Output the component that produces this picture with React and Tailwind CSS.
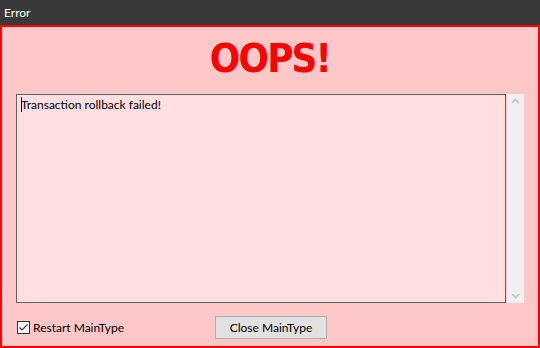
export default function App() {
    return (
        <div className="w-[540px] h-[348px] flex flex-col bg-[#ffc8c8] text-[12px] font-['Lato','Noto_Sans',sans-serif] overflow-hidden">
            <div className="h-[25px] shrink-0 bg-[#393939] text-white flex items-center pl-[4px] text-[12px]">
                Error
            </div>
            <div className="flex-1 flex flex-col border-2 border-[#ff0000] px-[14px] pt-[10px]">
                <h1 className="text-center text-[39px] leading-[44px] font-bold text-[#ff0000] font-['DejaVu_Sans',Verdana,sans-serif] tracking-[-2px] scale-x-[0.92]">
                    OOPS!
                </h1>
                <div className="mt-[13px] flex gap-[1px] h-[209px]">
                    <div className="flex-1 border border-[#646464] bg-[#ffdfdf] px-[4px] py-[1px] text-black relative">
                        <span className="absolute left-[4px] top-[2px] w-px h-[15px] bg-black"></span>
                        Transaction rollback failed!
                    </div>
                    <div className="w-[17px] bg-[#f0f0f0] flex flex-col justify-between items-center py-[4px]">
                        <svg width="9" height="6" viewBox="0 0 9 6">
                            <path d="M1 5 L4.5 1.5 L8 5" stroke="#c2c2c2" strokeWidth="1.6" fill="none" />
                        </svg>
                        <svg width="9" height="6" viewBox="0 0 9 6">
                            <path d="M1 1 L4.5 4.5 L8 1" stroke="#c2c2c2" strokeWidth="1.6" fill="none" />
                        </svg>
                    </div>
                </div>
                <div className="flex items-center mt-[13px] h-[23px]">
                    <label className="flex items-center gap-[3px] pl-[1px] w-[199px]">
                        <span className="w-[13px] h-[13px] border border-[#333333] bg-white flex items-center justify-center">
                            <svg width="11" height="11" viewBox="0 0 11 11">
                                <path d="M1.5 5.5 L4 8 L9.5 2.5" stroke="#333333" strokeWidth="1.2" fill="none" />
                            </svg>
                        </span>
                        <span className="text-black">Restart MainType</span>
                    </label>
                    <button className="w-[112px] h-[23px] bg-[#e1e1e1] border border-[#adadad] text-black">
                        Close MainType
                    </button>
                </div>
            </div>
        </div>
    );
}
